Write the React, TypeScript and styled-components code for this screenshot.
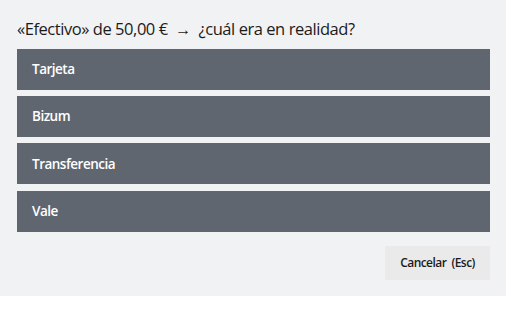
import React from "react";
import styled, { createGlobalStyle } from "styled-components";

const GlobalStyle = createGlobalStyle`
  html, body {
    margin: 0;
    padding: 0;
    background: #ffffff;
  }
  body {
    font-family: "Open Sans", "Noto Sans", "Liberation Sans", sans-serif;
  }
`;

const Panel = styled.div`
  width: 506px;
  height: 296px;
  box-sizing: border-box;
  background: #f1f2f4;
  padding: 16px 16px 0 17px;
  display: flex;
  flex-direction: column;
`;

const Title = styled.h2`
  margin: 0 0 7.5px;
  font-size: 16.5px;
  font-weight: 400;
  letter-spacing: -0.45px;
  color: #1b1b1b;
  line-height: 25px;
  white-space: pre;
`;

const Arrow = styled.span`
  font-size: 16px;
  line-height: 0;
`;

const OptionList = styled.div`
  display: flex;
  flex-direction: column;
  gap: 6.4px;
  width: 473px;
`;

const OptionButton = styled.button`
  height: 41px;
  border: none;
  background: #5f6670;
  color: #ffffff;
  font-family: inherit;
  font-size: 13.5px;
  font-weight: 600;
  letter-spacing: -0.5px;
  text-align: left;
  padding: 0 15px;
  cursor: pointer;
`;

const Footer = styled.div`
  display: flex;
  justify-content: flex-end;
  width: 473px;
  margin-top: 14px;
`;

const CancelButton = styled.button`
  width: 105px;
  height: 34px;
  border: none;
  background: #eaeaea;
  color: #1b1b1b;
  font-family: inherit;
  font-size: 12px;
  font-weight: 600;
  letter-spacing: -0.55px;
  cursor: pointer;
  white-space: pre;
`;

const options = ["Tarjeta", "Bizum", "Transferencia", "Vale"];

export default function App() {
  return (
    <>
      <GlobalStyle />
      <Panel>
        <Title>
          {"«Efectivo» de 50,00 €  "}
          <Arrow>→</Arrow>
          {"  ¿cuál era en realidad?"}
        </Title>
        <OptionList>
          {options.map((o) => (
            <OptionButton key={o}>{o}</OptionButton>
          ))}
        </OptionList>
        <Footer>
          <CancelButton>{"Cancelar  (Esc)"}</CancelButton>
        </Footer>
      </Panel>
    </>
  );
}
